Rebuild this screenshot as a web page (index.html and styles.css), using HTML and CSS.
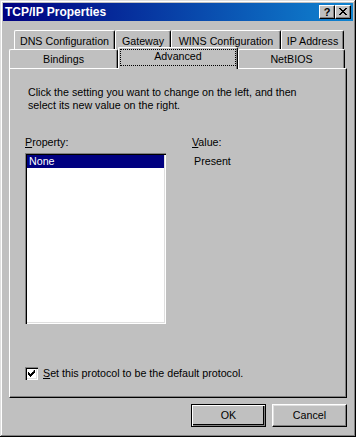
FILE: index.html
```html
<!DOCTYPE html>
<html lang="en">
<head>
    <meta charset="UTF-8">
    <title>TCP/IP Properties</title>
    <link rel="stylesheet" href="styles.css">
</head>
<body>
    <div class="window">
        <div class="titlebar">
            <span class="title">TCP/IP Properties</span>
            <div class="caption-btns">
                <div class="cap-btn help">?</div>
                <div class="cap-btn close">
                    <svg width="8" height="7" viewBox="0 0 8 7">
                        <path d="M0 0h2v1h1v1h2v-1h1v-1h2v1h-1v1h-1v1h-1v1h1v1h1v1h1v1h-2v-1h-1v-1h-2v1h-1v1h-2v-1h1v-1h1v-1h1v-1h-1v-1h-1v-1h-1z" fill="#000"/>
                    </svg>
                </div>
            </div>
        </div>

        <div class="dlg-body">
            <div class="tabs">
                <div class="tab-row back">
                    <div class="tab t-dns">DNS Configuration</div>
                    <div class="tab t-gw">Gateway</div>
                    <div class="tab t-wins">WINS Configuration</div>
                    <div class="tab t-ip">IP Address</div>
                </div>
                <div class="tab-row front">
                    <div class="tab t-bind">Bindings</div>
                    <div class="tab t-adv active"><span class="focus">Advanced</span></div>
                    <div class="tab t-net">NetBIOS</div>
                </div>
            </div>

            <div class="panel">
                <p class="intro">Click the setting you want to change on the left, and then<br>select its new value on the right.</p>

                <div class="columns">
                    <div class="col-prop">
                        <div class="lbl"><u>P</u>roperty:</div>
                        <div class="listbox">
                            <div class="item selected">None</div>
                        </div>
                    </div>
                    <div class="col-value">
                        <div class="lbl"><u>V</u>alue:</div>
                        <div class="value">Present</div>
                    </div>
                </div>

                <div class="check">
                    <span class="box">
                        <svg width="7" height="7" viewBox="0 0 7 7">
                            <path d="M6 0h1v3h-1v1h-1v1h-1v1h-1v1h-1v-1h-1v-1h-1v-3h1v1h1v1h1v-1h1v-1h1z" fill="#000"/>
                        </svg>
                    </span>
                    <span><u>S</u>et this protocol to be the default protocol.</span>
                </div>
            </div>

            <div class="buttons">
                <div class="btn default"><span>OK</span></div>
                <div class="btn"><span>Cancel</span></div>
            </div>
        </div>
    </div>
</body>
</html>
```

FILE: styles.css
```css
/* Windows 95 style dialog */
body, html {
    margin: 0;
    padding: 0;
}

body {
    background: #c0c0c0;
    font-family: "Liberation Sans", Arial, sans-serif;
    font-size: 10.7px;
    line-height: 13px;
    color: #000;
}

.window {
    width: 356px;
    height: 437px;
    box-sizing: border-box;
    padding: 3px;
    background: #c0c0c0;
    box-shadow: inset -1px -1px #000, inset 1px 1px #dfdfdf,
                inset -2px -2px #808080, inset 2px 2px #fff;
}

.titlebar {
    height: 18px;
    display: flex;
    align-items: center;
    justify-content: space-between;
    padding: 0 2px 0 2px;
    background: linear-gradient(to right, #000080, #1084d0);
}

.title {
    color: #fff;
    font-weight: bold;
    font-size: 12px;
    line-height: 14px;
}

.caption-btns {
    display: flex;
}

.cap-btn {
    width: 16px;
    height: 14px;
    box-sizing: border-box;
    background: #c0c0c0;
    border-top: 1px solid #fff;
    border-left: 1px solid #fff;
    border-right: 1px solid #000;
    border-bottom: 1px solid #000;
    box-shadow: inset -1px -1px #808080;
    display: flex;
    align-items: center;
    justify-content: center;
}

.cap-btn.help {
    font-weight: bold;
    font-size: 11px;
    line-height: 11px;
}

.cap-btn.close svg {
    display: block;
    margin-top: -1px;
}

.dlg-body {
    padding: 0 6px;
}

/* tabs */
.tabs {
    margin-top: 9px;
}

.tab-row {
    display: flex;
    height: 19px;
}

.tab-row.back {
    margin-left: 5px;
}

.tab-row.front {
    align-items: flex-end;
}

.tab {
    box-sizing: border-box;
    height: 19px;
    text-align: center;
    background: #c0c0c0;
    border-top: 1px solid #fff;
    border-left: 1px solid #fff;
    border-right: 1px solid #000;
    border-radius: 2px 2px 0 0;
    box-shadow: inset -1px 0 #808080;
}

.back .tab {
    padding-top: 4px;
}

.front .tab {
    padding-top: 3px;
}

.t-dns { width: 101px; }
.t-gw { width: 56px; }
.t-wins { width: 110px; }
.t-ip { width: 63px; }

.t-bind { width: 109px; }
.t-adv { width: 120px; }
.t-net { width: 107px; }

.front .tab.active {
    height: 22px;
    margin-bottom: -1px;
    padding: 1px 1px 0 1px;
    position: relative;
    z-index: 1;
}

.focus {
    display: block;
    height: 17px;
    outline: 1px dotted #000;
    outline-offset: -1px;
    line-height: 15px;
}

/* panel */
.panel {
    box-sizing: border-box;
    width: 338px;
    height: 330px;
    padding: 0 15px;
    border-top: 1px solid #fff;
    border-left: 1px solid #fff;
    border-right: 1px solid #000;
    border-bottom: 1px solid #000;
    box-shadow: inset -1px -1px #808080;
}

.intro {
    margin: 17px 0 0 3px;
}

.columns {
    display: flex;
    margin-top: 24px;
}

.col-prop {
    width: 167px;
}

.listbox {
    margin-top: 4px;
    width: 141px;
    height: 171px;
    box-sizing: border-box;
    background: #fff;
    padding: 2px;
    box-shadow: inset 1px 1px #808080, inset 2px 2px #000,
                inset -1px -1px #fff, inset -2px -2px #dfdfdf;
}

.item {
    height: 13px;
    padding-left: 2px;
}

.item.selected {
    background: #000080;
    color: #fff;
}

.value {
    margin-top: 6px;
    padding-left: 2px;
}

.check {
    display: flex;
    align-items: center;
    margin-top: 43px;
}

.box {
    width: 13px;
    height: 13px;
    box-sizing: border-box;
    background: #fff;
    margin-right: 5px;
    display: flex;
    align-items: center;
    justify-content: center;
    box-shadow: inset 1px 1px #808080, inset 2px 2px #000,
                inset -1px -1px #fff, inset -2px -2px #dfdfdf;
}

/* buttons */
.buttons {
    display: flex;
    justify-content: flex-end;
    gap: 6px;
    margin-top: 6px;
}

.btn {
    width: 75px;
    height: 23px;
    box-sizing: border-box;
    display: flex;
    align-items: center;
    justify-content: center;
    background: #c0c0c0;
    border-top: 1px solid #fff;
    border-left: 1px solid #fff;
    border-right: 1px solid #000;
    border-bottom: 1px solid #000;
    box-shadow: inset -1px -1px #808080, inset 1px 1px #dfdfdf;
}

.btn.default {
    border: 1px solid #000;
    box-shadow: inset 1px 1px #fff, inset -1px -1px #808080,
                inset -2px -2px #000;
}
```
